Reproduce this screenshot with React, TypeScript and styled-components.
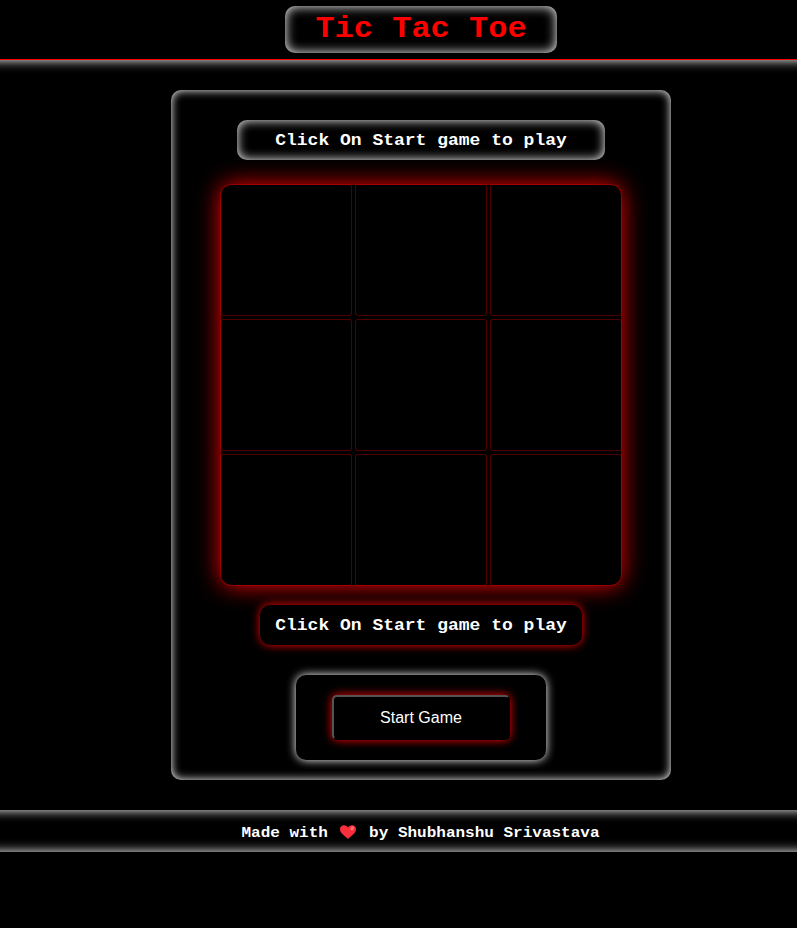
import React from "react";
import styled, { createGlobalStyle } from "styled-components";

const GlobalStyle = createGlobalStyle`
  * { box-sizing: border-box; margin: 0; padding: 0; }
  html { background: #000; }
  body {
    color: #fff;
    font-family: "Courier New", "Liberation Mono", monospace;
    font-weight: 700;
  }
`;

const Viewport = styled.div`
  width: 100%;
  height: 928px;
  overflow: hidden;
`;

const Page = styled.div`
  display: flex;
  flex-direction: column;
  align-items: center;
  width: 842px;
  height: 927px;
  background: #000;
`;

const Wide = styled.span<{ $drop?: number }>`
  display: inline-block;
  transform: translateY(${(p) => p.$drop ?? 0}px) scaleY(0.9);
  transform-origin: 50% 72%;
`;

const Header = styled.header`
  display: flex;
  justify-content: center;
  width: 100%;
  height: 60px;
  padding-top: 6px;
  border-bottom: 1px solid #f00;
`;

const Title = styled.h1`
  width: 272px;
  height: 47px;
  border-radius: 10px;
  box-shadow: inset 0 0 12px #fff;
  color: #f00;
  font-size: 32px;
  line-height: 46px;
  text-align: center;
`;

const Main = styled.main`
  display: flex;
  justify-content: center;
  width: 100%;
  height: 750px;
  padding-top: 30px;
  box-shadow: inset 0 20px 12px -20px #fff;
`;

const Panel = styled.section`
  display: flex;
  flex-direction: column;
  align-items: center;
  width: 500px;
  height: 690px;
  padding-top: 30px;
  border-radius: 10px;
  box-shadow: inset 0 0 10px #fff;
`;

const Message = styled.div<{ $glow?: boolean }>`
  width: ${(p) => (p.$glow ? 322 : 368)}px;
  height: 40px;
  border-radius: 10px;
  background: #000;
  box-shadow: ${(p) => (p.$glow ? "0 0 10px #f00" : "inset 0 0 11px #fff")};
  font-size: 18px;
  line-height: 40px;
  text-align: center;
  white-space: nowrap;
`;

const Board = styled.div`
  display: grid;
  grid-template-columns: repeat(3, 130px);
  grid-template-rows: repeat(3, 130px);
  gap: 5px;
  margin: 25px 0 20px;
  border-radius: 10px;
  box-shadow: 0 0 25px #f00;
`;

const Cell = styled.div`
  border-radius: 2px;
  box-shadow: 0 0 0 1px rgba(255, 0, 0, 0.31);

  &:nth-child(1) { border-top-left-radius: 10px; }
  &:nth-child(3) { border-top-right-radius: 10px; }
  &:nth-child(7) { border-bottom-left-radius: 10px; }
  &:nth-child(9) { border-bottom-right-radius: 10px; }
`;

const Controls = styled.div`
  display: flex;
  align-items: center;
  justify-content: center;
  width: 250px;
  height: 85px;
  margin-top: 30px;
  border-radius: 10px;
  box-shadow: 0 0 10px #fff;
`;

const StartButton = styled.button`
  width: 178px;
  height: 45px;
  background: #000;
  color: #fff;
  border: 2px outset #000;
  border-radius: 5px;
  box-shadow: 0 0 10px #f00;
  font: 16px "Liberation Sans", Arial, sans-serif;
`;

const Footer = styled.footer`
  display: flex;
  align-items: center;
  justify-content: center;
  width: 100%;
  height: 42px;
  padding: 2px 1px 0 0;
  box-shadow:
    inset 0 20px 12px -20px #fff,
    inset 0 -20px 12px -20px #fff;
  font-size: 16px;
  white-space: pre;
`;

const Heart = styled.svg`
  width: 18px;
  height: 16px;
  margin: 0 2px;
`;

export default function App() {
  return (
    <Viewport>
      <GlobalStyle />
      <Page>
        <Header><Title><Wide>Tic Tac Toe</Wide></Title></Header>
        <Main>
          <Panel>
            <Message><Wide>Click On Start game to play</Wide></Message>
            <Board>
              {Array.from({ length: 9 }, (_, i) => <Cell key={i} />)}
            </Board>
            <Message $glow><Wide>Click On Start game to play</Wide></Message>
            <Controls><StartButton>Start Game</StartButton></Controls>
          </Panel>
        </Main>
        <Footer>
          <Wide $drop={1}>{"Made with "}</Wide>
          <Heart viewBox="0 0 18 16" aria-label="heart">
            <path d="M9 15C7.5 13 1 9.8 1 5.2C1 .6 6.8-.2 9 3.4C11.2-.2 17 .6 17 5.2C17 9.8 10.5 13 9 15Z" fill="#f92f3c" />
            <ellipse cx="13.2" cy="4.3" rx="1.5" ry="2.2" transform="rotate(35 13.2 4.3)" fill="#ff7468" />
          </Heart>
          <Wide $drop={1}>{" by Shubhanshu Srivastava"}</Wide>
        </Footer>
      </Page>
    </Viewport>
  );
}
